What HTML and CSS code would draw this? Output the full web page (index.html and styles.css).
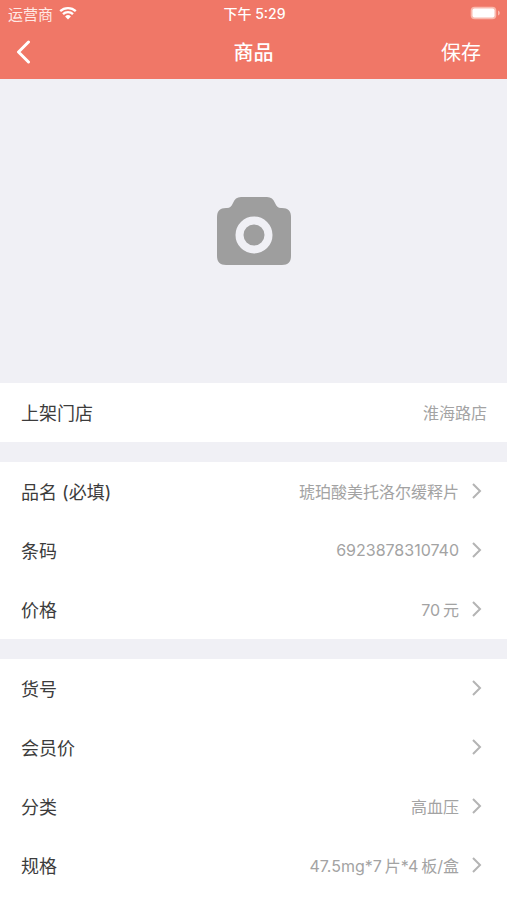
FILE: index.html
```html
<!DOCTYPE html>
<html lang="zh-CN">
<head>
<meta charset="utf-8">
<meta name="viewport" content="width=device-width, initial-scale=1">
<title>商品</title>
<link rel="stylesheet" href="styles.css">
</head>
<body>
<header class="header">
  <div class="status">
    <div class="carrier">
      <span>运营商</span>
      <svg class="wifi" viewBox="0 0 18 14" aria-hidden="true">
        <path d="M1.2 5.2a11.2 11.2 0 0 1 15.6 0M4 8.2a7.2 7.2 0 0 1 10 0" fill="none" stroke="currentColor" stroke-width="2.3"/>
        <path d="M9 13.4 6.1 10.5a4.2 4.2 0 0 1 5.8 0z" fill="currentColor"/>
      </svg>
    </div>
    <time class="time">下午 5:29</time>
    <svg class="battery" viewBox="0 0 31 14" aria-hidden="true">
      <rect x=".7" y=".7" width="25.6" height="12.6" rx="4" fill="#f9b9ae"/>
      <rect x="2.500" y="2.500" width="22" height="9" rx="2" fill="#fff"/>
      <path d="M28 4.500c2.400.9 2.400 4.100 0 5z" fill="#f9b9ae"/>
    </svg>
  </div>
  <nav class="nav">
    <button class="back" type="button" aria-label="返回">
      <svg viewBox="0 0 14 24" aria-hidden="true"><path d="M12 2 2 12l10 10" fill="none" stroke="currentColor" stroke-width="3" stroke-linecap="round" stroke-linejoin="round"/></svg>
    </button>
    <h1 class="title">商品</h1>
    <button class="save" type="button">保存</button>
  </nav>
</header>
<main class="content">
  <button class="photo" type="button" aria-label="添加图片">
    <svg class="camera" viewBox="0 0 74 69" aria-hidden="true">
      <path d="M9 11h1c3 0 4.500-1.500 6-5 1.500-4 4-6 8-6h26c4 0 6.500 2 8 6 1.500 3.500 3 5 6 5h1c6 0 9 3 9 9v39c0 6-3 9-9 9H9c-6 0-9-3-9-9V20c0-6 3-9 9-9z" fill="#9e9e9e"/>
      <circle cx="37" cy="38" r="14.500" fill="none" stroke="#f0f0f5" stroke-width="8"/>
    </svg>
  </button>
  <ul class="group">
    <li class="row"><span class="label">上架门店</span><span class="value">淮海路店</span></li>
  </ul>
  <ul class="group">
    <li><button class="row link" type="button"><span class="label">品名 (必填)</span><span class="value">琥珀酸美托洛尔缓释片</span><svg class="chevron" viewBox="0 0 10 16" aria-hidden="true"><path d="m1 1 7 7-7 7"/></svg></button></li>
    <li><button class="row link" type="button"><span class="label">条码</span><span class="value">6923878310740</span><svg class="chevron" viewBox="0 0 10 16" aria-hidden="true"><path d="m1 1 7 7-7 7"/></svg></button></li>
    <li><button class="row link" type="button"><span class="label">价格</span><span class="value">70&thinsp;元</span><svg class="chevron" viewBox="0 0 10 16" aria-hidden="true"><path d="m1 1 7 7-7 7"/></svg></button></li>
  </ul>
  <ul class="group">
    <li><button class="row link" type="button"><span class="label">货号</span><span class="value"></span><svg class="chevron" viewBox="0 0 10 16" aria-hidden="true"><path d="m1 1 7 7-7 7"/></svg></button></li>
    <li><button class="row link" type="button"><span class="label">会员价</span><span class="value"></span><svg class="chevron" viewBox="0 0 10 16" aria-hidden="true"><path d="m1 1 7 7-7 7"/></svg></button></li>
    <li><button class="row link" type="button"><span class="label">分类</span><span class="value">高血压</span><svg class="chevron" viewBox="0 0 10 16" aria-hidden="true"><path d="m1 1 7 7-7 7"/></svg></button></li>
    <li><button class="row link" type="button"><span class="label">规格</span><span class="value">47.5mg*7&thinsp;片*4&thinsp;板/盒</span><svg class="chevron" viewBox="0 0 10 16" aria-hidden="true"><path d="m1 1 7 7-7 7"/></svg></button></li>
  </ul>
</main>
</body>
</html>
```
FILE: styles.css
```css
* { box-sizing: border-box; }

body {
  display: flex;
  flex-direction: column;
  min-height: 100vh;
  margin: 0;
  background: #f0f0f5;
  color: #3c3c3c;
  font-family: Inter, "Noto Sans CJK SC", sans-serif;
  font-size: 18px;
}

button {
  padding: 0;
  border: 0;
  background: none;
  color: inherit;
  font: inherit;
}

svg { display: block; }

.header {
  background: #f07767;
  color: #fff;
}

.status,
.nav {
  display: grid;
  grid-template-columns: 1fr auto 1fr;
  align-items: center;
}

.status {
  height: 26px;
  padding: 0 6px 0 8px;
  font-size: 14px;
}

.carrier {
  display: flex;
  align-items: center;
  gap: 6px;
  color: #ffe9e5;
  font-size: 15px;
}

.wifi {
  width: 18px;
  height: 14px;
  color: #fff;
}

.time { font-weight: 500; }

.battery {
  width: 31px;
  height: 14px;
  justify-self: end;
}

.nav {
  height: 53px;
  padding: 0 16px 2px;
}

.back { justify-self: start; }

.back svg {
  width: 15px;
  height: 24px;
}

.title {
  margin: 0;
  font-size: 20px;
  font-weight: 500;
}

.save {
  justify-self: end;
  padding-right: 10px;
  font-size: 20px;
}

.content {
  display: flex;
  flex: 1;
  flex-direction: column;
}

.photo {
  display: grid;
  place-items: center;
  width: 100%;
  height: 304px;
}

.camera {
  width: 74px;
  height: 69px;
}

.group {
  margin: 0 0 20px;
  padding: 0;
  background: #fff;
  list-style: none;
}

.group:last-child {
  flex: 1;
  margin-bottom: 0;
}

.row {
  display: flex;
  align-items: center;
  width: 100%;
  height: 59px;
  padding: 0 20px 1px 21px;
}

.link { padding-right: 25px; }

.value {
  flex: 1;
  color: #a3a3a3;
  font-size: 16px;
  text-align: right;
}

.chevron {
  width: 10px;
  height: 16px;
  margin-left: 13px;
  fill: none;
  stroke: #b4b4b4;
  stroke-width: 2;
}
```
